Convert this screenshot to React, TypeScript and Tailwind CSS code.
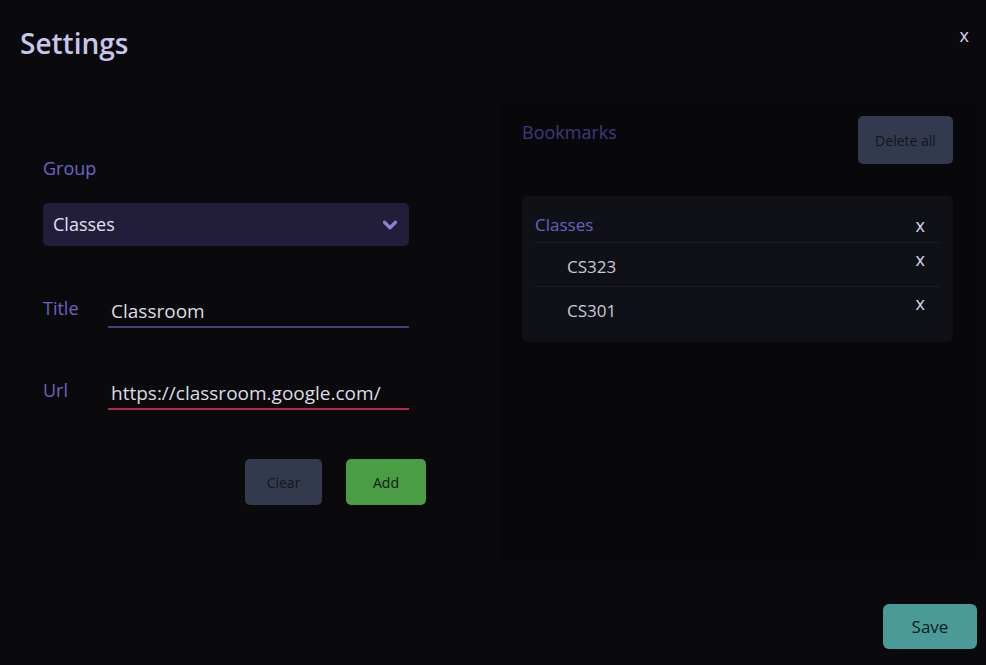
import { ChevronDown } from 'lucide-react';

const bookmarks = ['CS323', 'CS301'];

export default function App() {
  return (
    <div className="w-[986px] h-[665px] bg-[#0a0a0d] flex flex-col overflow-hidden font-['Open_Sans',sans-serif]">
      {/* header */}
      <div className="h-[103px] flex justify-between items-start pl-5 pr-[17px]">
        <h1 className="pt-[24px] text-[28px] leading-[38px] font-semibold text-[#c9c5ec]">Settings</h1>
        <button className="pt-[23px] text-[18px] leading-[24px] text-[#d6d2f0]">x</button>
      </div>

      <div className="flex flex-1">
        {/* form */}
        <div className="w-[498px] pl-[43px] pt-[53px]">
          <div className="text-[18px] leading-[24px] text-[#6d64c8]">Group</div>
          <div className="mt-[23px] w-[366px] h-[43px] bg-[#221d38] rounded-[5px] flex items-center justify-between pl-[10px] pr-[8px]">
            <span className="text-[18px] text-[#e4e0f2]">Classes</span>
            <ChevronDown size={22} strokeWidth={3.5} className="text-[#8c80d4]" />
          </div>

          <div className="mt-[50px] flex items-start">
            <label className="w-[65px] text-[18px] leading-[24px] text-[#6d62c2]">Title</label>
            <div className="w-[301px] border-b-2 border-[#4a3d7c] pl-[3px] pb-[3px] pt-[3px] text-[19px] leading-[24px] text-[#dcdce4]">Classroom</div>
          </div>

          <div className="mt-[50px] flex items-start">
            <label className="w-[65px] text-[18px] leading-[24px] text-[#6d62c2]">Url</label>
            <div className="w-[301px] border-b-2 border-[#b8254e] pl-[3px] pb-[3px] pt-[3px] text-[19px] leading-[24px] text-[#dcdce4]">https://classroom.google.com/</div>
          </div>

          <div className="mt-[49px] w-[383px] flex justify-end gap-6">
            <button className="w-[77px] h-[46px] rounded-[5px] bg-[#333a4d] text-[14px] text-[#16161f]">Clear</button>
            <button className="w-[80px] h-[46px] rounded-[5px] bg-[#4a9c45] text-[14px] text-[#10180f]">Add</button>
          </div>
        </div>

        {/* bookmarks panel */}
        <div className="w-[478px] h-[457px] bg-[#08080b] rounded-lg pl-6 pr-[23px] pt-[13px]">
          <div className="flex justify-between items-start">
            <h2 className="pt-[4px] text-[18px] leading-[24px] text-[#3d3a80]">Bookmarks</h2>
            <button className="w-[95px] h-[48px] rounded-[5px] bg-[#333a4d] text-[14px] text-[#14141c]">Delete all</button>
          </div>

          <div className="mt-[32px] h-[146px] bg-[#101116] rounded-md pl-[12px] pr-[13px] pt-[9px]">
            <div className="h-[38px] flex justify-between items-center border-b border-[#1b1c22] pl-px pr-[15px] pt-[3px]">
              <span className="text-[17px] text-[#6962c4]">Classes</span>
              <span className="text-[18px] text-[#d6d4ee]">x</span>
            </div>
            {bookmarks.map((b, i) => (
              <div
                key={b}
                className={`h-[44px] flex justify-between items-start pl-[33px] pr-[15px] ${i === 0 ? 'border-b border-[#1b1c22]' : ''}`}
              >
                <span className="pt-[12px] text-[17px] leading-[24px] text-[#cacad8]">{b}</span>
                <span className="pt-[4px] text-[18px] leading-[24px] text-[#d6d4ee]">x</span>
              </div>
            ))}
          </div>
        </div>
      </div>

      {/* footer */}
      <div className="flex justify-end pr-[9px] pb-[16px]">
        <button className="w-[94px] h-[45px] rounded-[6px] bg-[#4a9a98] text-[17px] text-[#0e1c22]">Save</button>
      </div>
    </div>
  );
}
